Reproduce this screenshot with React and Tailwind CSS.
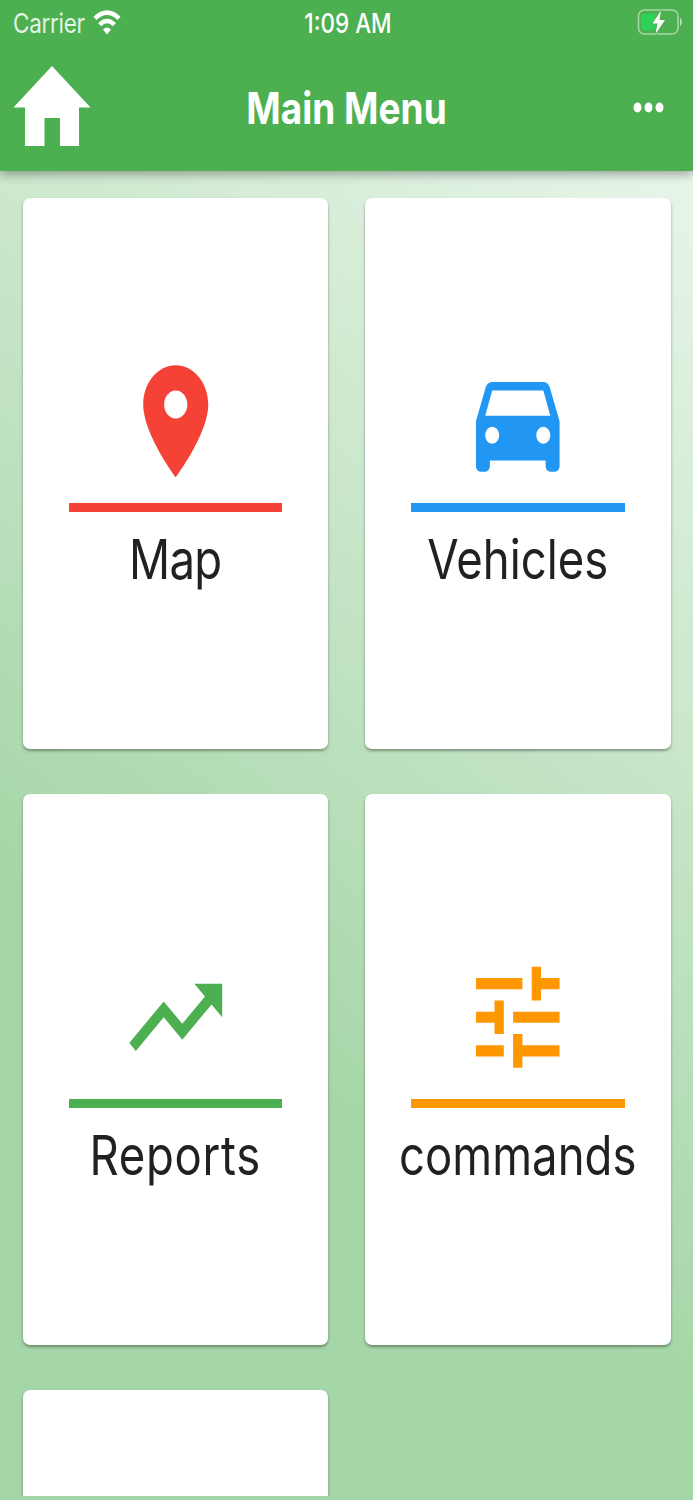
import React from 'react';

const MENU_ITEMS = [
  {
    id: 'map',
    title: 'Map',
    text: 'text-[#f44336]',
    bar: 'bg-[#f44336]',
    tracking: 'tracking-[-0.6px]',
    path: 'M12 2C8.13 2 5 5.13 5 9c0 5.25 7 13 7 13s7-7.75 7-13c0-3.87-3.13-7-7-7zm0 9.5c-1.38 0-2.5-1.12-2.5-2.5s1.12-2.5 2.5-2.5 2.5 1.12 2.5 2.5-1.12 2.5-2.5 2.5z',
  },
  {
    id: 'vehicles',
    title: 'Vehicles',
    text: 'text-[#2196f3]',
    bar: 'bg-[#2196f3]',
    tracking: 'tracking-normal',
    path: 'M18.92 6.01C18.72 5.42 18.16 5 17.5 5h-11c-.66 0-1.21.42-1.42 1.01L3 12v8c0 .55.45 1 1 1h1c.55 0 1-.45 1-1v-1h12v1c0 .55.45 1 1 1h1c.55 0 1-.45 1-1v-8l-2.08-5.99zM6.500 16c-.83 0-1.5-.67-1.5-1.5S5.67 13 6.500 13s1.5.67 1.5 1.5S7.33 16 6.500 16zm11 0c-.83 0-1.5-.67-1.5-1.5s.67-1.5 1.5-1.5 1.5.67 1.5 1.5-.67 1.5-1.5 1.5zM5 11l1.5-4.500h11L19 11H5z',
  },
  {
    id: 'reports',
    title: 'Reports',
    text: 'text-[#4caf50]',
    bar: 'bg-[#4caf50]',
    tracking: 'tracking-[0.7px]',
    path: 'M16 6l2.29 2.29-4.88 4.88-4-4L2 16.59 3.41 18l6-6 4 4 6.3-6.29L22 12V6z',
  },
  {
    id: 'commands',
    title: 'commands',
    text: 'text-[#ff9800]',
    bar: 'bg-[#ff9800]',
    tracking: 'tracking-normal',
    path: 'M3 17v2h6v-2H3zM3 5v2h10V5H3zm10 16v-2h8v-2h-8v-2h-2v6h2zM7 9v2H3v2h4v2h2V9H7zm14 4v-2H11v2h10zm-6-4h2V7h4V5h-4V3h-2v6z',
  },
];

const StatusBar = () => (
  <div className="grid grid-cols-3 items-center h-[46px] pl-[13px] pr-[10px] text-[22.5px] leading-none">
    <div className="flex items-center gap-2 text-white/85">
      <span className="inline-block scale-y-[1.2] tracking-[-0.3px]">Carrier</span>
      <svg className="w-[28px] h-[25px] -mt-px text-white" viewBox="0 0 28 25" fill="none" stroke="currentColor" strokeWidth="4.4">
        <path d="M2 8.3Q14 -3.1 26 8.3" />
        <path d="M6.6 14.6Q14 7.4 21.4 14.6" />
        <path d="M14 24.500L10 19.600Q14 15.400 18 19.600Z" fill="currentColor" stroke="none" />
      </svg>
    </div>
    <span className="justify-self-center font-medium scale-y-[1.2]">1:09 AM</span>
    <svg className="justify-self-end w-[46px] h-[28px] -mt-[2px]" viewBox="0 0 46 28">
      <rect x="1.5" y="2" width="39.5" height="24" rx="6" fill="none" stroke="#fff" strokeOpacity=".5" strokeWidth="1.6" />
      <rect x="4" y="5.500" width="15" height="17" rx="3.500" fill="#30d158" />
      <path d="M43.500 10.500q2.500 3.500 0 7z" fill="#fff" fillOpacity=".5" stroke="#fff" strokeOpacity=".4" />
      <path d="M24 2.500L15.500 15.500h5L18.500 26 28 12h-5.500z" fill="#fff" stroke="#4caf50" strokeWidth="1.6" paintOrder="stroke" />
    </svg>
  </div>
);

const AppBar = () => (
  <header className="relative z-10 h-[171px] shrink-0 bg-[#4caf50] text-white shadow-[0_3px_10px_rgba(0,0,0,0.35)]">
    <StatusBar />
    <div className="grid grid-cols-[1fr_auto_1fr] items-center h-[122px] px-[13px]">
      <svg className="w-[78px] h-[82px] -mt-[3px]" viewBox="0 0 78 82" fill="currentColor">
        <path d="M39 1L77.500 42.500H66V81H47V53H31.500V81H12V42.500H.5z" />
      </svg>
      <h1 className="whitespace-nowrap text-[37px] font-bold leading-none scale-y-[1.2]">Main Menu</h1>
      <button type="button" aria-label="More" className="justify-self-end mr-4">
        <svg className="w-[31px] h-[11px]" viewBox="0 0 31 11" fill="currentColor">
          <ellipse cx="4.500" cy="5.500" rx="4" ry="5" />
          <ellipse cx="15.500" cy="5.500" rx="4" ry="5" />
          <ellipse cx="26.500" cy="5.500" rx="4" ry="5" />
        </svg>
      </button>
    </div>
  </header>
);

const MenuCard = ({ item }) => (
  <div className="h-[550.500px] rounded-[7px] bg-white pt-[156px] flex flex-col items-center shadow-[0_2px_3px_rgba(0,0,0,0.35)]">
    {item && (
      <>
        <svg
          className={`w-[111.500px] h-[134.500px] shrink-0 ${item.text}`}
          viewBox="0 0 24 24"
          preserveAspectRatio="none"
          fill="currentColor"
        >
          <path d={item.path} />
        </svg>
        <div className={`mt-[14px] w-[213.500px] h-[9px] shrink-0 ${item.bar}`} />
        <span className={`mt-[23px] text-[45.500px] leading-[50px] text-[#212121] scale-y-[1.2] ${item.tracking}`}>
          {item.title}
        </span>
      </>
    )}
  </div>
);

const App = () => (
  <div className="h-[1500px] w-[693px] flex flex-col overflow-hidden font-['Inter',sans-serif]">
    <AppBar />
    <main className="flex-1 min-h-0 pb-[4.500px] bg-[linear-gradient(217.2deg,#e8f5e9_0%,#c8e6c9_33%,#a5d6a7_66%)]">
      <div className="grid grid-cols-2 content-start gap-x-[37px] gap-y-[45.500px] h-full overflow-hidden pt-[27px] px-[22.500px]">
        {MENU_ITEMS.map((item) => (
          <MenuCard key={item.id} item={item} />
        ))}
        <MenuCard />
      </div>
    </main>
  </div>
);

export default App;
